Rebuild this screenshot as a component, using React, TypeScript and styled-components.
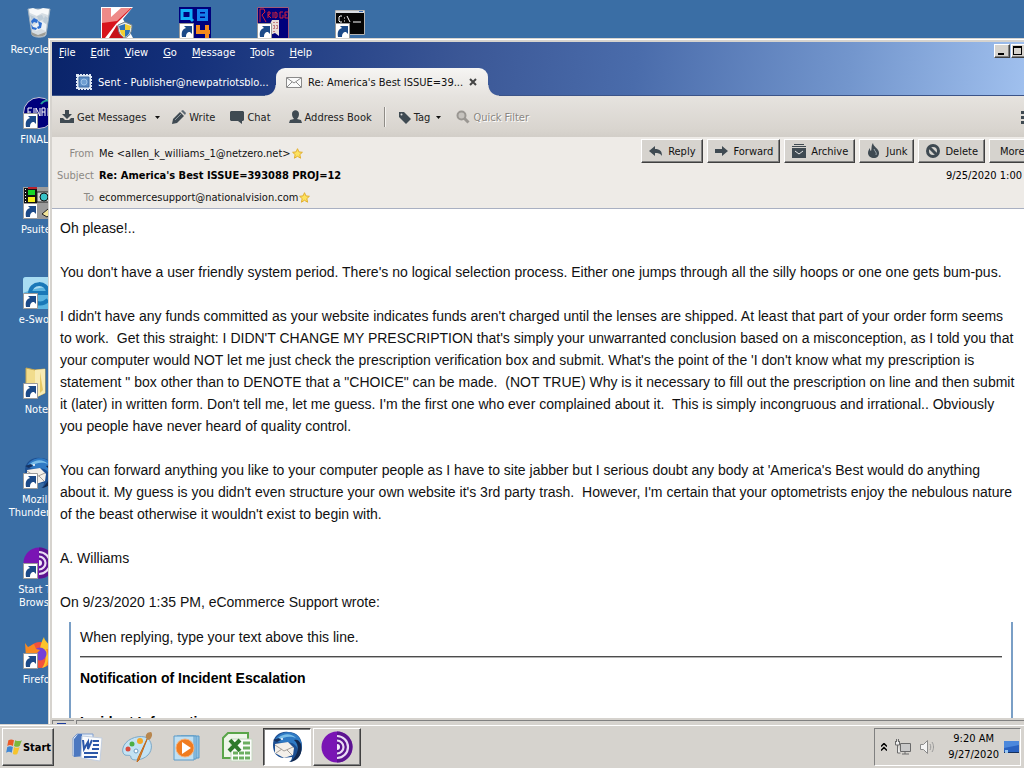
import React from 'react';
import styled, { createGlobalStyle, css } from 'styled-components';

const Global = createGlobalStyle`
  * { box-sizing: border-box; }
  body { margin: 0; background: #3a6ea5; }
  button, input { font: inherit; color: inherit; }
`;

const face = '#d6d3ce';

const Screen = styled.div`
  height: 100vh;
  display: flex;
  flex-direction: column;
  overflow: hidden;
  font-family: 'DejaVu Sans Condensed', 'DejaVu Sans', sans-serif;
  font-size: 11px;
  line-height: 13px;
  color: #000;
`;

/* ---------- desktop ---------- */

const Desktop = styled.main`
  position: relative;
  flex: 1;
  min-height: 0;
  overflow: hidden;
  background: #3a6ea5;
`;

const IconColumns = styled.div`
  display: grid;
  grid-auto-flow: column;
  grid-template-rows: repeat(8, 90px);
  grid-auto-columns: 78px;
  padding-top: 7px;
`;

const Shortcut = styled.a<{ $top?: boolean }>`
  ${(p) => p.$top && css`grid-row: 1;`}
  display: flex;
  flex-direction: column;
  align-items: center;
  gap: 4px;
  color: #fff;
  text-decoration: none;
  text-align: center;
  svg { display: block; flex: none; }
  span { width: 64px; }
`;

/* ---------- mail window ---------- */

const Window = styled.section`
  position: absolute;
  inset: 38px 0 0 48px;
  display: flex;
  flex-direction: column;
  border-top: 1px solid ${face};
  border-left: 1px solid ${face};
  box-shadow: inset 1px 1px 0 #fff;
  padding: 3px 0 0 3px;
  background: ${face};
`;

const TitleBar = styled.header`
  flex: none;
  height: 54px;
  display: flex;
  flex-direction: column;
  justify-content: space-between;
  background: linear-gradient(97deg, #0a246a 0%, #14307a 14%, #3b5796 42%, #4a6cab 60%, #7396cd 82%, #a0c0ee 100%);
`;

const TopRow = styled.div`
  display: flex;
  justify-content: space-between;
  align-items: flex-start;
`;

const MenuBar = styled.nav`
  display: flex;
  gap: 15px;
  padding: 4px 7px;
  color: #fff;
`;

const MenuItem = styled.button`
  padding: 0;
  border: 0;
  background: none;
  &::first-letter { text-decoration: underline; }
`;

const WindowButtons = styled.div`
  display: flex;
  gap: 1px;
  padding-top: 2px;
`;

const raised = css`
  border: 1px solid;
  border-color: #fff #404040 #404040 #fff;
  box-shadow: inset -1px -1px 0 #808080;
  background: ${face};
`;

const CaptionButton = styled.button<{ $cut?: boolean }>`
  ${raised}
  width: ${(p) => (p.$cut ? 13 : 16)}px;
  height: 14px;
  padding: 0;
  ${(p) => p.$cut && css`border-right: 0; box-shadow: inset 0 -1px 0 #808080;`}
  svg { display: block; }
`;

const TabStrip = styled.div`
  display: flex;
  height: 28px;
  border-bottom: 1px solid #3c5488;
`;

const Tab = styled.button<{ $active?: boolean }>`
  position: relative;
  display: flex;
  align-items: center;
  gap: 6px;
  height: 28px;
  border: 0;
  padding: 0 10px 0 24px;
  background: none;
  color: #fff;
  white-space: nowrap;
  svg { display: block; flex: none; }
  ${(p) => p.$active && css`
    padding: 0 10px;
    width: 212px;
    color: #111;
    border-radius: 9px 9px 0 0;
    background: linear-gradient(#f6f5f3, #e6e3df);
    &::before, &::after {
      content: '';
      position: absolute;
      bottom: 0;
      width: 11px;
      height: 11px;
    }
    &::before { right: 100%; background: radial-gradient(circle at 0 0, transparent 10px, #e7e4e0 11px); }
    &::after { left: 100%; background: radial-gradient(circle at 100% 0, transparent 10px, #e7e4e0 11px); }
  `}
`;

const InactiveSlot = styled.div`
  width: 224px;
`;

const TabClose = styled.span`
  display: block;
  margin-left: auto;
  padding-right: 2px;
`;

const Toolbar = styled.div`
  flex: none;
  height: 41px;
  display: flex;
  align-items: center;
  padding: 1px 0 0 8px;
  background: linear-gradient(#e6e3df, #d9d5cf 80%, #d2cec8);
`;

const Tool = styled.button<{ $faded?: boolean; $gap?: number }>`
  display: flex;
  align-items: center;
  gap: 3px;
  margin-right: ${(p) => p.$gap ?? 15}px;
  padding: 0;
  border: 0;
  background: none;
  white-space: nowrap;
  color: ${(p) => (p.$faded ? '#8a8782' : '#222')};
  ${(p) => p.$faded && css`text-shadow: 1px 1px 0 #fff;`}
  svg { display: block; }
`;

const Separator = styled.i`
  width: 2px;
  height: 20px;
  margin-right: 12px;
  border-left: 1px solid #8f8c87;
  border-right: 1px solid #f4f2ef;
`;

const AppMenu = styled.button`
  margin-left: auto;
  width: 4px;
  padding: 0;
  border: 0;
  background: none;
  overflow: hidden;
  svg { display: block; }
`;

const Envelope = styled.div`
  flex: none;
  display: flex;
  justify-content: space-between;
  height: 72px;
  background: #eeebe7;
  border-bottom: 1px solid #a9b0c2;
`;

const Fields = styled.dl`
  display: grid;
  grid-template-columns: 42px auto;
  grid-auto-rows: 22px;
  align-items: center;
  column-gap: 5px;
  margin: 0;
  padding-top: 5px;
  white-space: nowrap;
  dt { color: #8c8984; text-align: right; }
  dd { margin: 0; display: flex; align-items: center; gap: 1px; color: #111; }
  strong { color: #000; }
`;

const Side = styled.div`
  display: flex;
  flex-direction: column;
  gap: 6px;
  padding-top: 2px;
`;

const Actions = styled.div`
  display: flex;
  gap: 4px;
`;

const Action = styled.button<{ $cut?: boolean }>`
  ${raised}
  display: flex;
  align-items: center;
  gap: 4px;
  height: 24px;
  padding: 0 6px;
  white-space: nowrap;
  color: #111;
  ${(p) => p.$cut && css`
    padding: 0 0 0 10px;
    width: 35px;
    border-right: 0;
    box-shadow: inset 0 -1px 0 #808080;
  `}
  svg { display: block; flex: none; }
`;

const Sent = styled.time`
  align-self: flex-end;
  padding-right: 2px;
`;

const Message = styled.article`
  flex: 1;
  min-height: 0;
  overflow: hidden;
  padding: 8px 11px 0 8px;
  background: #fff;
  font: 14px/22px 'Liberation Sans', Arial, sans-serif;
  color: #111;
`;

const Paragraph = styled.p`
  margin: 0 0 22px;
  white-space: pre;
`;

const Attribution = styled.p`
  margin: 0;
`;

const Quote = styled.blockquote`
  margin: 9px 0 0 9px;
  padding: 4px 9px 0;
  border: solid #7a9fc6;
  border-width: 0 2px;
  min-height: 200px;
  p { margin: 0; }
  hr {
    margin: 8px 0 9px;
    border: 0;
    border-top: 1px solid #4c4c4c;
    border-bottom: 1px solid #b4b4b4;
  }
  h2 { margin: 0 0 22px; font-size: 14px; line-height: 22px; color: #000; }
`;

const StatusBar = styled.footer`
  flex: none;
  display: flex;
  gap: 2px;
  height: 6px;
  padding-top: 2px;
  overflow: hidden;
`;

const StatusCell = styled.div<{ $grow?: boolean }>`
  ${(p) => (p.$grow ? css`flex: 1;` : css`width: 22px;`)}
  height: 6px;
  border: 1px solid #808080;
  border-width: 1px 0 0 1px;
  svg { display: block; }
`;

/* ---------- taskbar ---------- */

const Taskbar = styled.footer`
  flex: none;
  height: 44px;
  display: flex;
  align-items: center;
  padding: 1px 3px 0 2px;
  border-top: 1px solid ${face};
  box-shadow: inset 0 1px 0 #fff;
  background: ${face};
`;

const StartButton = styled.button`
  ${raised}
  display: flex;
  align-items: center;
  justify-content: center;
  width: 52px;
  height: 38px;
  padding: 0;
  margin-right: 8px;
  font-weight: bold;
`;

const TaskButton = styled.button<{ $state?: 'open' | 'active' }>`
  display: grid;
  place-items: center;
  width: 50px;
  height: 38px;
  padding: 0;
  border: 0;
  background: none;
  ${(p) => p.$state && css`width: 48px; margin: 0 1px;`}
  ${(p) => p.$state === 'open' && raised}
  ${(p) => p.$state === 'active' && css`
    border: 1px solid;
    border-color: #404040 #fff #fff #404040;
    box-shadow: inset 1px 1px 0 #808080;
    background: #fff;
  `}
  svg { display: block; }
`;

const Tray = styled.div`
  display: flex;
  align-items: center;
  gap: 8px;
  height: 38px;
  margin-left: auto;
  padding: 0 1px 0 6px;
  border: 1px solid;
  border-color: #808080 #fff #fff #808080;
  svg { display: block; }
`;

const Clock = styled.time`
  padding: 0 0 0 5px;
  text-align: center;
  line-height: 16px;
  white-space: pre-line;
  margin-right: -4px;
`;

/* ---------- artwork ---------- */

const LinkArrow = () => (
  <g>
    <path d="M.5 16.5h14v15H.5z" fill="#fff" stroke="#9a9a9a" />
    <path d="M3 30c-1-6 1-8 4-9l-2-2h8v8l-2-2c-3 0-4 2-4 5z" fill="#1c4a88" />
  </g>
);

const Art = ({ children }: { children: React.ReactNode }) => (
  <svg width="32" height="32" viewBox="0 0 32 32" aria-hidden="true">{children}</svg>
);

const BinArt = () => (
  <Art>
    <path d="M5 2l4 26c3 3 12 3 14 0l4-26z" fill="#d5dde3" stroke="#9fb0bf" />
    <path d="M6 2l4-1 5 2 5-2 6 1-1 6-6-2-5 3-7-3z" fill="#f7f9fa" />
    <path d="M7 8l5 2-3 4zM14 9l5-1 2 4-5 2zM22 9l3 2-2 7-3-4z" fill="#bccbd7" />
    <path d="M9 20l4 4 5-2 5 2v-7l-5-3-4 2z" fill="#eef2f5" />
    <path d="M8 25l7 3 8-3-1 3c-4 2-9 2-13 0z" fill="#9c9c96" />
    <path d="M8 14l3-3 4 2-1 3-3-1-2 2zM15 14l4 2-1 5-3 1-1-2 2-1zM8 17l2 3 4 1-1 2-4-1z" fill="#2f6fd0" />
  </Art>
);

const KasperskyArt = () => (
  <Art>
    <path d="M0 0h32L22 12l10 19H0z" fill="#fff" />
    <path d="M1 1h9v13L21 1h10L15 17 4 31H1z" fill="#d8141c" />
    <path d="M1 1h9v9L20 1h10L16 14 1 16z" fill="#ee8a88" />
    <path d="M16 18l7 13H8z" fill="#c71219" />
    <path d="M24 15l7 3c0 7-2 11-7 13-5-2-7-6-7-13z" fill="#e9eef0" stroke="#738088" />
    <path d="M24 17v6h-5l-1-4z" fill="#2e73b8" /><path d="M24 17l6 2-1 4h-5z" fill="#f2cf33" />
    <path d="M24 23v7c-3-1-5-4-5-7z" fill="#f2cf33" /><path d="M24 23h5c0 3-2 6-5 7z" fill="#2e73b8" />
  </Art>
);

const QbArt = () => (
  <Art>
    <path d="M0 0h32v32H0z" fill="#00007c" />
    <path d="M3 3.500h9v8H3zM10 10l4 4" fill="none" stroke="#12b0f8" strokeWidth="3" />
    <path d="M19.500 3.500h8v9h-8zM20 8h9" fill="none" stroke="#1482ec" strokeWidth="3" />
    <path d="M19 18v7h12M28 18v13" fill="none" stroke="#f48a1c" strokeWidth="4" />
    <LinkArrow />
  </Art>
);

const BridgeArt = () => (
  <Art>
    <path d="M.5 .5h31v31H.5z" fill="#00007c" stroke="#a05a78" />
    <path d="M3 15V2h4l1 3-3 3 4 7M11 11V5h2v2l-2 1 3 3M16 5v6M18 5v6l2-1V6zM26 5h-3v6h3V8M31 5h-3v6h3M28 8h2" fill="none" stroke="#d0203c" />
    <path d="M13 17l2-4h7v16l-4-3-5 2z" fill="#e8dcd8" />
    <path d="M17 15v10M20 15v9M14 20h8" stroke="#a02030" strokeDasharray="1 2" />
    <LinkArrow />
  </Art>
);

const PromptArt = () => (
  <Art>
    <path d="M.5 3.500h29v24H.5z" fill="#050505" stroke="#b5b5b5" />
    <path d="M1 4h28v2H1z" fill="#d9dde2" />
    <path d="M24 4h4v1h-4z" fill="#3c6cb0" />
    <path d="M7 9H5L4 10v4l1 1h2M9 11h1M9 14h1M12 9l3 6M18 15h8" fill="none" stroke="#fff" />
    <LinkArrow />
  </Art>
);

const FinalArt = () => (
  <Art>
    <circle cx="16" cy="16" r="15.500" fill="#00007c" stroke="#c8c8d8" />
    <path d="M5 19v-8h4M5 15h3M11 11v8M13 19v-8l4 8v-8M19 19v-8h3v8M19 15h3M25 11v8h4" fill="none" stroke="#fff" />
    <path d="M18 7c3-4 7-4 9-3" fill="none" stroke="#26a29a" strokeWidth="2" />
    <LinkArrow />
  </Art>
);

const PsuiteArt = () => (
  <Art>
    <path d="M0 0h32v32H0z" fill="#9b9b9b" />
    <path d="M1 1h13v16H1z" fill="#111" /><path d="M2.500 2v14" stroke="#fff" strokeDasharray="1 2" />
    <path d="M5 3h7v5H5z" fill="#16d428" /><path d="M5 10h7v5H5z" fill="#f2ee1c" /><path d="M5 0h9v2H5z" fill="#b8202c" />
    <path d="M14 5h17v10H14z" fill="#d0d0d0" stroke="#222" /><circle cx="21" cy="10" r="4" fill="#38c2c8" stroke="#111" />
    <path d="M19 27l6-5 4 4-5 4z" fill="#f4e69a" stroke="#222" />
    <LinkArrow />
  </Art>
);

const SwordArt = () => (
  <Art>
    <rect width="32" height="32" rx="3" fill="#5cb4e0" />
    <path d="M0 3c0-2 1-3 3-3h26c2 0 3 1 3 3v8C20 9 10 12 0 16z" fill="#a8dcf2" />
    <path d="M8 16h17c0-12-18-12-18 1 0 10 12 12 18 6" fill="none" stroke="#1a78b8" strokeWidth="4" />
    <LinkArrow />
  </Art>
);

const FolderArt = () => (
  <Art>
    <path d="M3 1l9 2 10-1v24l-11 5-8-3z" fill="#f1dc8c" stroke="#c8a850" />
    <path d="M12 3l10-1v24l-10 5z" fill="#f8ebb4" /><path d="M17 5l3 18-3 3z" fill="#e6c864" />
    <LinkArrow />
  </Art>
);

const BirdShape = () => (
  <g>
    <path d="M2 14C2 5 9 0 17 1c9 0 14 6 14 14 0 9-5 15-13 16 2-1 3-3 3-5l-9 1c-6-1-10-5-10-13z" fill="#1d4f92" />
    <path d="M4 9C9-1 24-1 29 8c3 6 2 14-3 19 2-7 1-12-5-15-6-2-10 1-14-1z" fill="#2f7ac4" />
    <path d="M7 7c6-5 13-5 18 0-5-2-12-2-18 3z" fill="#79bde8" />
    <path d="M4 13l13-2 6 6-1 7-9 3-9-5z" fill="#f4f0ea" />
    <path d="M4 14l9 6 9-4M5 22l6-4M21 24l-5-5" fill="none" stroke="#a6a09a" />
    <path d="M23 9c6 5 5 15-4 22 9-1 13-9 11-18-2-4-4-5-7-4z" fill="#12284e" />
    <path d="M2 9l6-2 2 2-4 2z" fill="#17325e" />
    <circle cx="11" cy="8" r="1" fill="#fff" />
  </g>
);

const BirdArt = () => <Art><BirdShape /><LinkArrow /></Art>;

const OnionShape = () => (
  <g>
    <circle cx="16" cy="16" r="15.500" fill="#7a14b4" />
    <path d="M16 .5a15.500 15.500 0 010 31z" fill="#5c1490" />
    <path d="M16 5a11 11 0 010 22M16 9.500a6.500 6.500 0 010 13" fill="none" stroke="#eadcf4" strokeWidth="2.200" />
    <path d="M16 13a3 3 0 010 6z" fill="#f4eafa" />
  </g>
);

const OnionArt = () => <Art><OnionShape /><LinkArrow /></Art>;

const FoxArt = () => (
  <Art>
    <circle cx="17" cy="18" r="13" fill="#f2523c" />
    <path d="M21 0c0 5 9 8 10 18-3 8-8 12-12 13 6-8 4-18-2-20 1-4 2-8 4-11z" fill="#fcc42c" />
    <path d="M27 12c3 6 1 14-5 18 4-6 4-12 1-18z" fill="#fd8a24" />
    <circle cx="17" cy="17" r="6.500" fill="#7440d8" />
    <path d="M2 6l3 4 6-3 2 5 4 1-5 5-9 2z" fill="#f98a20" />
    <LinkArrow />
  </Art>
);

const dark = '#3f4a52';

const Glyph = ({ w = 16, children }: { w?: number; children: React.ReactNode }) => (
  <svg width={w} height="16" viewBox={`0 0 ${w} 16`} aria-hidden="true">{children}</svg>
);

const StampIcon = () => (
  <Glyph>
    <path d="M1 1h14v14H1z" fill="#dfe9f4" stroke="#dfe9f4" strokeWidth="2" strokeDasharray="2 1" />
    <path d="M3 3h10v10H3z" fill="#5a8cc4" stroke="#3c6aa4" />
    <circle cx="8" cy="8" r="3" fill="#6f9fd2" stroke="#9dc2e6" />
  </Glyph>
);
const MailIcon = () => (
  <Glyph>
    <path d="M.5 3.500h15v10H.5z" fill="#fafafa" stroke="#8a8a8a" />
    <path d="M1 4l7 5 7-5M1 13l5-5M15 13l-5-5" fill="none" stroke="#8a8a8a" />
  </Glyph>
);
const DownloadIcon = () => (
  <Glyph w={14}>
    <path d="M5 1h4v4h3L7 10 2 5h3z" fill={dark} />
    <path d="M0 9h3l2 2h4l2-2h3v5H0z" fill={dark} />
  </Glyph>
);
const PencilIcon = () => (
  <Glyph w={14}>
    <path d="M0 15l1-5 7-7 4 4-7 7z" fill={dark} /><path d="M9 2l2-1 3 3-1 2z" fill="#5d6a74" />
    <path d="M3 11l6-6" stroke="#8a969e" />
  </Glyph>
);
const ChatIcon = () => <Glyph w={14}><path d="M1 2h12l1 1v8l-1 1h-1v3l-4-3H1l-1-1V3z" fill={dark} /></Glyph>;
const PersonIcon = () => (
  <Glyph w={13}>
    <path d="M3 5c0-5 7-5 7 0 0 2-1 4-2 5l4 1 1 3H0l1-3 4-1C4 9 3 7 3 5z" fill={dark} />
  </Glyph>
);
const TagIcon = () => (
  <Glyph w={13}>
    <path d="M1 3h5l7 7-5 5-7-7z" fill={dark} /><circle cx="3.500" cy="5.500" r="1" fill="#ddd" />
  </Glyph>
);
const SearchIcon = () => (
  <Glyph w={14}>
    <circle cx="5.500" cy="6.500" r="4" fill="#c6c3be" stroke="#9a9792" strokeWidth="2" />
    <path d="M8.500 9.500l4 4" stroke="#9a9792" strokeWidth="3" />
  </Glyph>
);
const DropArrow = () => (
  <svg width="5" height="3" viewBox="0 0 5 3" aria-hidden="true"><path d="M0 0h5L2.500 3z" fill="#111" /></svg>
);
const StarIcon = () => (
  <svg width="11" height="11" viewBox="0 0 11 11" aria-hidden="true">
    <path d="M5.500.7l1.400 3.200 3.500.4-2.600 2.300.8 3.600-3.100-1.900-3.100 1.900.8-3.600L.6 4.300l3.500-.4z" fill="#fde25e" stroke="#e2ae2c" />
  </svg>
);
const ReplyIcon = () => <Glyph><path d="M1 8l6-5v3c5 0 7 2 7 7-2-3-4-3-7-3v3z" fill={dark} /></Glyph>;
const ForwardIcon = () => <Glyph><path d="M1 6h7V3l6 5-6 5v-3H1z" fill={dark} /></Glyph>;
const ArchiveIcon = () => (
  <Glyph>
    <path d="M3 1.500h10M1 3.500h14" stroke={dark} />
    <path d="M1 5h14v10H1z" fill={dark} /><path d="M4 8l4 3 4-3" fill="none" stroke="#e6e6e6" />
  </Glyph>
);
const FlameIcon = () => (
  <Glyph>
    <path d="M7 0c0 4 6 5 6 10 0 3-2 5-5 5s-6-2-6-5c0-2 1-4 2-5 0 2 0 2 1 3 1-3 0-5 2-8z" fill={dark} />
    <path d="M8 6c1 3 3 3 2 6" fill="none" stroke="#9aa4ab" />
  </Glyph>
);
const DeleteIcon = () => (
  <Glyph>
    <circle cx="8" cy="8" r="5.500" fill="none" stroke={dark} strokeWidth="3" />
    <path d="M4 4l8 8" stroke={dark} strokeWidth="3" />
  </Glyph>
);

const FlagLogo = () => (
  <svg width="18" height="18" viewBox="0 0 16 16" aria-hidden="true">
    <path d="M3 2c2-1 3-1 5 0L7 7C5 6 4 6 2 7z" fill="#ea5a28" />
    <path d="M9 2c2 1 4 1 6 0l-2 5c-2 1-3 1-5 0z" fill="#7cb83c" />
    <path d="M2 8c2-1 3-1 5 0l-1 5c-2-1-3-1-5 0z" fill="#3f86d4" />
    <path d="M8 8c2 1 3 1 5 0l-2 6c-1 1-3 1-4 0z" fill="#f6c42c" />
  </svg>
);

const WordArt = () => (
  <Art>
    <path d="M6 3h16v22H2V7z" fill="#e8f0fa" stroke="#7f9dcf" />
    <path d="M3 26V8l4-5h4v22z" fill="#4c78c0" />
    <path d="M11 5l20 2-2 23-19-3z" fill="#fbfcfe" stroke="#c3cede" />
    <path d="M12 9l1 9 4-7v7l4-9" fill="none" stroke="#2b57a8" strokeWidth="2" />
    <path d="M22 10h6M22 14h6M21 18h7M13 22h14M13 26h13" stroke="#2b57a8" strokeWidth="2" />
  </Art>
);
const PaintArt = () => (
  <Art>
    <path d="M2 17C4 9 15 4 24 6c8 3 8 13 3 18-6 6-16 6-17 3 0-4-3-2-6-3-2-1-3-4-2-7z" fill="#c3e2f3" stroke="#7ba8c8" />
    <circle cx="7" cy="18" r="2.500" fill="#d94a3c" /><circle cx="11" cy="13" r="2.500" fill="#4cae44" /><circle cx="19" cy="10" r="3" fill="#f3a828" />
    <circle cx="15" cy="20" r="2" fill="#fff" stroke="#6d9cc0" />
    <path d="M27 6l-9 23-2 2 1-4z" fill="#e68a2e" stroke="#c06a1c" />
    <path d="M25 7c-1-3 1-6 5-6 2 2 1 6-2 8z" fill="#b8864e" />
  </Art>
);
const PlayerArt = () => (
  <Art>
    <path d="M10 5h18v22H10z" fill="#8fc1e2" stroke="#5a9ac8" />
    <path d="M6 5h19v23H6z" fill="#a9d2ec" stroke="#5a9ac8" />
    <path d="M3 5h20v24H3z" fill="#bfdff2" stroke="#5a9ac8" />
    <circle cx="14" cy="17" r="9" fill="#f07c20" stroke="#f6b07a" /><path d="M11 11l9 6-9 6z" fill="#fff" />
  </Art>
);
const ExcelArt = () => (
  <Art>
    <path d="M7 2h20v25H2V7z" fill="#eef6ea" stroke="#5aa54a" strokeWidth="2" />
    <path d="M10 8h21v22H10z" fill="#fbfdfa" stroke="#c6d8c2" />
    <path d="M9 9l10 11M19 9L8 20" stroke="#2f7a2c" strokeWidth="4" />
    <path d="M22 12h7M22 17h7M12 22h5M18 22h5M24 22h5M12 27h5M18 27h5M24 27h5" stroke="#6cae60" strokeWidth="3" />
  </Art>
);

const NetworkIcon = () => (
  <Glyph>
    <path d="M5.500 4.500h10v8h-10z" fill="#c9c9c9" stroke="#6a6a6a" /><path d="M7 15h7M10 13v2" stroke="#6a6a6a" />
    <path d="M.5 2v4h4V2M1.500 0v3M3.500 0v3M2.500 6v8h3" fill="#eee" stroke="#6a6a6a" />
  </Glyph>
);
const SpeakerIcon = () => (
  <Glyph>
    <path d="M1.500 5.500h3l4-4v13l-4-4h-3z" fill="#f4f4f4" stroke="#8a8a8a" />
    <path d="M11 5c1 2 1 4 0 6M13 3c2 3 2 7 0 10" fill="none" stroke="#9a9a9a" />
  </Glyph>
);
const ShowDesktopIcon = () => (
  <Glyph>
    <path d="M1 2h15v11H1z" fill="#2a62c0" /><path d="M1 2h15v4L1 9z" fill="#4c88dc" /><path d="M1 13h15v1H1z" fill="#16305c" />
    <path d="M2 11h3v3H2z" fill="#9cc8f0" />
  </Glyph>
);

/* ---------- page ---------- */

const columnIcons: [string, React.FC][] = [
  ['Recycle Bin', BinArt],
  ['FINAL 3', FinalArt],
  ['Psuite3', PsuiteArt],
  ['e-Sword', SwordArt],
  ['Notes', FolderArt],
  ['Mozilla Thunderbird', BirdArt],
  ['Start Tor Browser', OnionArt],
  ['Firefox', FoxArt],
];
const rowIcons: [string, React.FC][] = [
  ['Kaspersky', KasperskyArt],
  ['QB4', QbArt],
  ['Bridge', BridgeArt],
  ['Command Prompt', PromptArt],
];
const menus = ['File', 'Edit', 'View', 'Go', 'Message', 'Tools', 'Help'];
const actions: [string, React.FC][] = [
  ['Reply', ReplyIcon],
  ['Forward', ForwardIcon],
  ['Archive', ArchiveIcon],
  ['Junk', FlameIcon],
  ['Delete', DeleteIcon],
];
const paragraphs = [
  'Oh please!..',
  "You don't have a user friendly system period. There's no logical selection process. Either one jumps through all the silly hoops or one one gets bum-pus.",
  `I didn't have any funds committed as your website indicates funds aren't charged until the lenses are shipped. At least that part of your order form seems
to work.\u00a0 Get this straight: I DIDN'T CHANGE MY PRESCRIPTION that's simply your unwarranted conclusion based on a misconception, as I told you that
your computer would NOT let me just check the prescription verification box and submit. What's the point of the 'I don't know what my prescription is
statement " box other than to DENOTE that a "CHOICE" can be made.\u00a0 (NOT TRUE) Why is it necessary to fill out the prescription on line and then submit
it (later) in written form. Don't tell me, let me guess. I'm the first one who ever complained about it.\u00a0 This is simply incongruous and irrational.. Obviously
you people have never heard of quality control.`,
  `You can forward anything you like to your computer people as I have to site jabber but I serious doubt any body at 'America's Best would do anything
about it. My guess is you didn't even structure your own website it's 3rd party trash.\u00a0 However, I'm certain that your optometrists enjoy the nebulous nature
of the beast otherwise it wouldn't exist to begin with.`,
  'A. Williams',
];

export default function App() {
  return (
    <Screen>
      <Global />
      <Desktop>
        <IconColumns>
          {columnIcons.map(([name, Icon]) => (
            <Shortcut key={name} href="#"><Icon /><span>{name}</span></Shortcut>
          ))}
          {rowIcons.map(([name, Icon]) => (
            <Shortcut key={name} href="#" aria-label={name} $top><Icon /></Shortcut>
          ))}
        </IconColumns>

        <Window>
          <TitleBar>
            <TopRow>
              <MenuBar>{menus.map((m) => <MenuItem key={m}>{m}</MenuItem>)}</MenuBar>
              <WindowButtons>
                <CaptionButton aria-label="Minimize">
                  <svg width="14" height="12" viewBox="0 0 14 12"><path d="M3 8h6v2H3z" /></svg>
                </CaptionButton>
                <CaptionButton aria-label="Maximize" $cut>
                  <svg width="12" height="12" viewBox="0 0 12 12"><path d="M1 1h9v9H1zM2 3v6h7V3z" fillRule="evenodd" /></svg>
                </CaptionButton>
              </WindowButtons>
            </TopRow>
            <TabStrip>
              <InactiveSlot>
                <Tab><StampIcon />Sent - Publisher@newpatriotsblo...</Tab>
              </InactiveSlot>
              <Tab $active>
                <MailIcon />Re: America's Best ISSUE=39...
                <TabClose>
                  <svg width="8" height="8" viewBox="0 0 8 8"><path d="M1 1l6 6M7 1L1 7" stroke="#444" strokeWidth="2" /></svg>
                </TabClose>
              </Tab>
            </TabStrip>
          </TitleBar>

          <Toolbar>
            <Tool $gap={9}><DownloadIcon />Get Messages</Tool>
            <Tool aria-label="Get Messages options" $gap={12}><DropArrow /></Tool>
            <Tool><PencilIcon />Write</Tool>
            <Tool $gap={18}><ChatIcon />Chat</Tool>
            <Tool $gap={12}><PersonIcon />Address Book</Tool>
            <Separator />
            <Tool><TagIcon />Tag&nbsp;<DropArrow /></Tool>
            <Tool $faded><SearchIcon />Quick Filter</Tool>
            <AppMenu aria-label="Application menu">
              <svg width="4" height="13" viewBox="0 0 4 13"><path d="M1 0h3v3H1zM1 5h3v3H1zM1 10h3v3H1z" fill={dark} /></svg>
            </AppMenu>
          </Toolbar>

          <Envelope>
            <Fields>
              <dt>From</dt><dd>Me &lt;allen_k_williams_1@netzero.net&gt;<StarIcon /></dd>
              <dt>Subject</dt><dd><strong>Re: America's Best ISSUE=393088 PROJ=12</strong></dd>
              <dt>To</dt><dd>ecommercesupport@nationalvision.com<StarIcon /></dd>
            </Fields>
            <Side>
              <Actions>
                {actions.map(([name, Icon]) => <Action key={name}><Icon />{name}</Action>)}
                <Action $cut>More</Action>
              </Actions>
              <Sent>9/25/2020 1:00</Sent>
            </Side>
          </Envelope>

          <Message>
            {paragraphs.map((text) => <Paragraph key={text}>{text}</Paragraph>)}
            <Attribution>On 9/23/2020 1:35 PM, eCommerce Support wrote:</Attribution>
            <Quote>
              <p>When replying, type your text above this line.</p>
              <hr />
              <h2>Notification of Incident Escalation</h2>
              <h2>Incident Information</h2>
            </Quote>
          </Message>

          <StatusBar>
            <StatusCell>
              <svg width="20" height="4" viewBox="0 0 20 4"><path d="M4 2h9v2H4z" fill="#1c3c9c" /></svg>
            </StatusCell>
            <StatusCell $grow />
          </StatusBar>
        </Window>
      </Desktop>

      <Taskbar>
        <StartButton><FlagLogo />Start</StartButton>
        <TaskButton aria-label="Word"><WordArt /></TaskButton>
        <TaskButton aria-label="Paint"><PaintArt /></TaskButton>
        <TaskButton aria-label="Media Player"><PlayerArt /></TaskButton>
        <TaskButton aria-label="Excel"><ExcelArt /></TaskButton>
        <TaskButton aria-label="Thunderbird" $state="active"><Art><BirdShape /></Art></TaskButton>
        <TaskButton aria-label="Tor Browser" $state="open"><Art><OnionShape /></Art></TaskButton>
        <Tray>
          <svg width="6" height="8" viewBox="0 0 6 8"><path d="M0 3.500l3-3 3 3M0 7.500l3-3 3 3" fill="none" stroke="#000" strokeWidth="1.500" /></svg>
          <NetworkIcon />
          <SpeakerIcon />
          <Clock>{'9:20 AM\n9/27/2020'}</Clock>
          <ShowDesktopIcon />
        </Tray>
      </Taskbar>
    </Screen>
  );
}
